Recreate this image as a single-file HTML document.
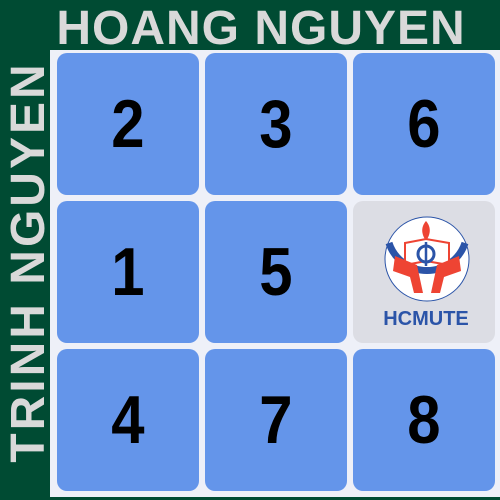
<!DOCTYPE html>
<html><head><style>
html,body{margin:0;padding:0}
body{width:500px;height:500px;background:#004b33;position:relative;overflow:hidden;font-family:"Liberation Sans",sans-serif}
.h{position:absolute;left:40px;top:5px;width:442px;height:44px;color:#d9d9d9;font-weight:bold;font-size:48px;line-height:48px;white-space:nowrap;letter-spacing:1px;text-align:center}
.v{position:absolute;left:-193px;top:240px;width:440px;height:44px;transform:rotate(-90deg);color:#d9d9d9;font-weight:bold;font-size:48px;line-height:48px;white-space:nowrap;letter-spacing:3px;text-align:center}
.g{position:absolute;left:50px;top:50px;width:450px;height:447px;background:#eef0f8}
.t{position:absolute;width:142px;height:142px;border-radius:10px;background:#6495ea;display:flex;align-items:center;justify-content:center;font-weight:bold;font-size:68px;color:#000}
.t span{display:inline-block;transform:scaleX(0.88)}
</style></head><body>
<div class="h">HOANG NGUYEN</div>
<div class="v">TRINH NGUYEN</div>
<div class="g"></div>
<div class="t" style="left:57px;top:53px"><span>2</span></div>
<div class="t" style="left:205px;top:53px"><span>3</span></div>
<div class="t" style="left:353px;top:53px"><span>6</span></div>
<div class="t" style="left:57px;top:201px"><span>1</span></div>
<div class="t" style="left:205px;top:201px"><span>5</span></div>
<div class="t" style="left:353px;top:201px;background:#dcdde4;display:block">
<svg width="142" height="142" viewBox="0 0 142 142" style="position:absolute;left:0;top:0">
<circle cx="74" cy="58" r="42" fill="#fff" stroke="#2b54a8" stroke-width="1"/>
<path d="M36 42 A40 40 0 0 0 112 42" fill="none" stroke="#2b54a8" stroke-width="7"/>
<path d="M73 20 C67 27 69 34 73 40 C77 34 79 27 73 20Z" fill="#e43"/>
<path d="M52 42 L73 38 L96 42 L96 64 L73 60 L52 64Z" fill="#fff" stroke="#e43" stroke-width="2"/>
<circle cx="73" cy="53" r="8" fill="#fff" stroke="#2b54a8" stroke-width="3"/>
<line x1="73" y1="41" x2="73" y2="65" stroke="#2b54a8" stroke-width="2.5"/>
<path d="M42 55 L64 64 L70 92 L61 92 L57 76 L40 70Z" fill="#e43"/>
<path d="M106 55 L84 64 L78 92 L87 92 L91 76 L108 70Z" fill="#e43"/>
<text x="73" y="124" text-anchor="middle" font-family="Liberation Sans" font-weight="bold" font-size="20" fill="#2b54a8">HCMUTE</text>
</svg></div>
<div class="t" style="left:57px;top:349px"><span>4</span></div>
<div class="t" style="left:205px;top:349px"><span>7</span></div>
<div class="t" style="left:353px;top:349px"><span>8</span></div>
</body></html>
